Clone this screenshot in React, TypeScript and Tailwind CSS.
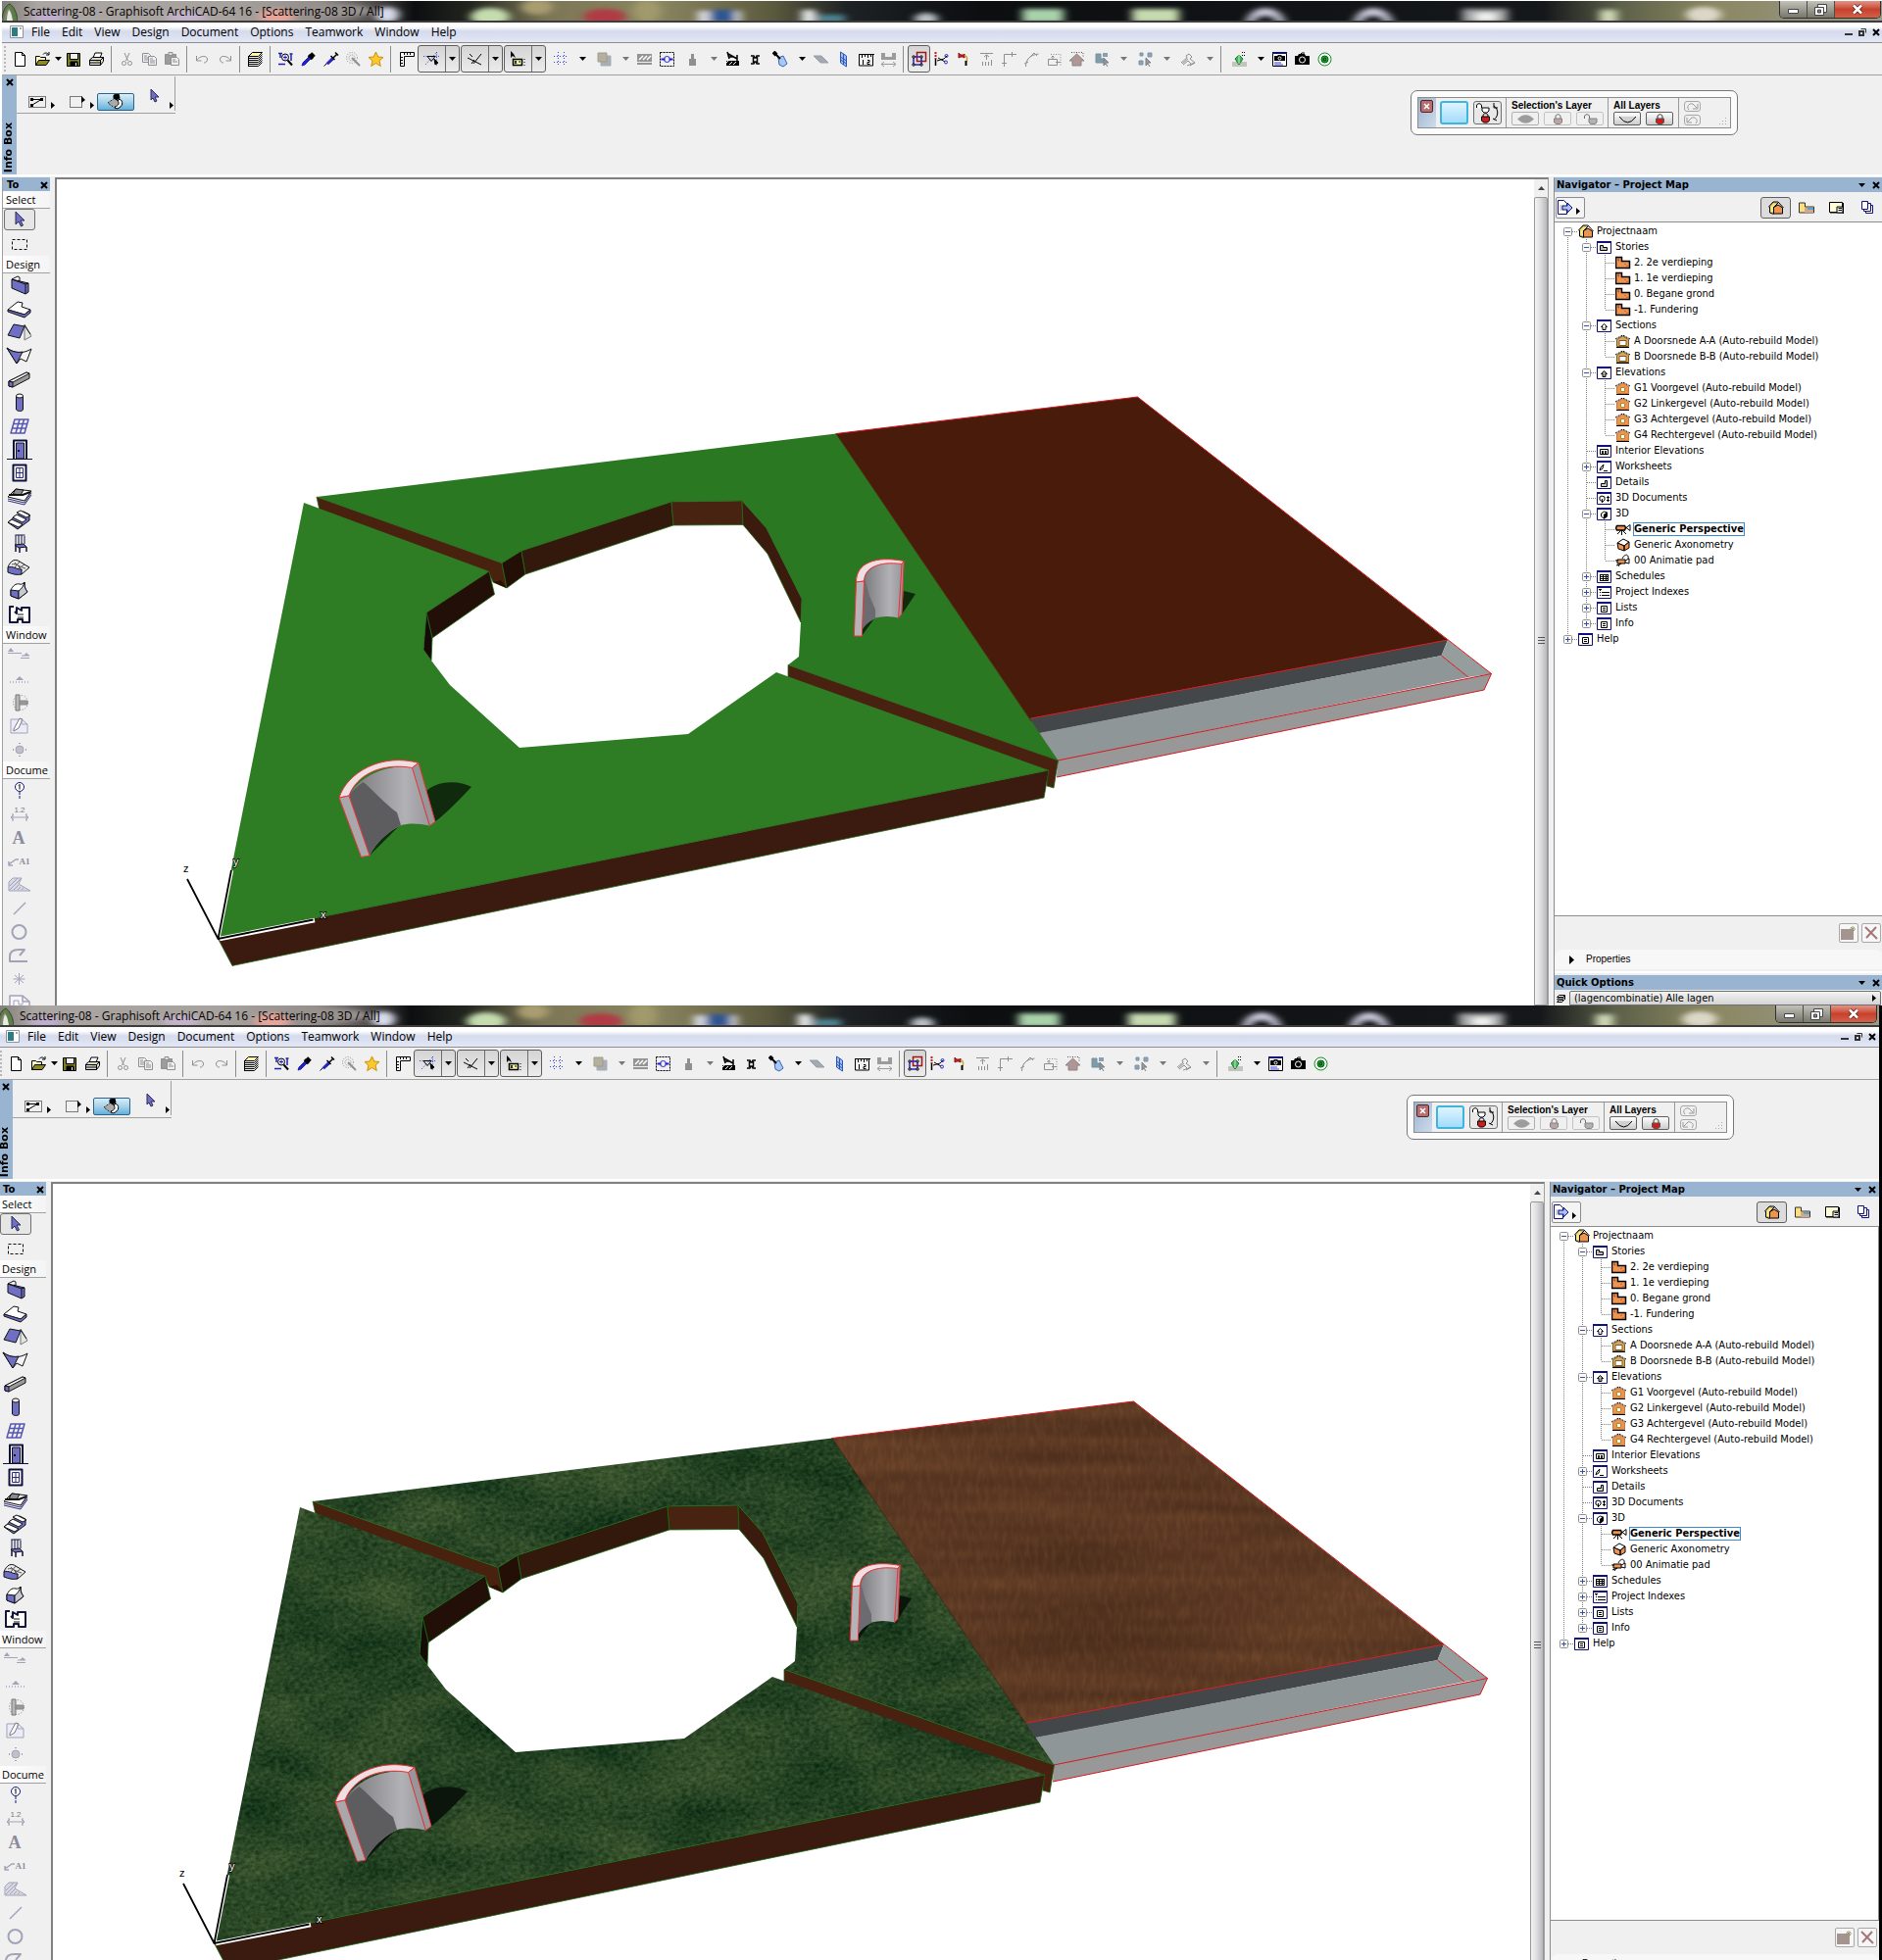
import React from "react";

type Kids = { children: React.ReactNode };

/* ---------- small drawing helpers ---------- */

function Ic({ children }: Kids) {
  return (
    <svg width="17" height="17" viewBox="0 0 17 17" fill="none" stroke="#000" className="shrink-0">
      {children}
    </svg>
  );
}

function Tool({ children }: Kids) {
  return (
    <svg width="28" height="22" viewBox="0 0 28 22" fill="none" stroke="#111" strokeLinejoin="round" className="shrink-0">
      {children}
    </svg>
  );
}

function Caret({ color = "#000" }: { color?: string }) {
  return (
    <svg width="7" height="4" viewBox="0 0 7 4" className="shrink-0">
      <path d="M0 0h7L3.5 4z" fill={color} />
    </svg>
  );
}

function RightCaret() {
  return (
    <svg width="4" height="7" viewBox="0 0 4 7" className="shrink-0">
      <path d="M0 0v7L4 3.5z" fill="#000" />
    </svg>
  );
}

function Cross({ size = 8 }: { size?: number }) {
  return (
    <svg width={size} height={size} viewBox="0 0 8 8" className="shrink-0">
      <path d="M1 1l6 6M7 1L1 7" stroke="#000" strokeWidth="2" />
    </svg>
  );
}

/* ---------- top toolbar icons ---------- */

const G = "#8f8f93";

const icons: Record<string, React.ReactNode> = {
  New: <Ic><path d="M3.5 1.5h7l3 3v11h-10zM10.5 1.5v3h3" fill="#fff" /></Ic>,
  Open: (
    <Ic>
      <path d="M1.5 14.5v-9h4l1 1h5v3" fill="#fffcc0" />
      <path d="M1.5 14.5l3-5h11l-3.500 5z" fill="#8a8a20" />
      <path d="M9 3.500c1.500-2 4-2 5.500 0M15 1v3h-3" />
    </Ic>
  ),
  Save: (
    <Ic>
      <path d="M1.500 2.500h13v13h-13z" fill="#7d7d1c" />
      <path d="M4.500 2.500h8v6h-8z" fill="#f0f0f0" />
      <path d="M5 11h7v4H5z" fill="#000" />
      <path d="M10 12h1v3h-1z" fill="#fff" stroke="none" />
    </Ic>
  ),
  Print: (
    <Ic>
      <path d="M5 7l2-5h7l-2 5z" fill="#fff" />
      <path d="M1.500 9l3-2.500h11v4l-3 4h-11z" fill="#d8d8d8" />
      <path d="M1.500 9.500h11v5M12.500 9.500l3-3M2 12h10" />
      <path d="M8 10.500h3" stroke="#d8c800" />
    </Ic>
  ),
  Cut: (
    <Ic>
      <path d="M6 2l3.500 8M11 2L7.500 10" stroke={G} />
      <circle cx="5.500" cy="12.500" r="2" stroke={G} />
      <circle cx="11.500" cy="12.500" r="2" stroke={G} />
    </Ic>
  ),
  Copy: (
    <Ic>
      <path d="M1.500 2.500h6l2 2v7h-8zM3 5h3M3 7h5M3 9h5" stroke={G} />
      <path d="M7.500 5.500h6l2 2v7h-8z" fill="#f0f0f0" stroke={G} />
      <path d="M9 8h3M9 10h5M9 12h5" stroke={G} />
    </Ic>
  ),
  Paste: (
    <Ic>
      <path d="M1.500 3.500h11v10h-11z" fill="#9c9c9c" stroke={G} />
      <path d="M5 1.500h4v3H5z" fill="#ddd" stroke={G} />
      <path d="M7.500 6.500h6l2 2v6h-8z" fill="#f0f0f0" stroke={G} />
      <path d="M9 9h3M9 11h5" stroke={G} />
    </Ic>
  ),
  Undo: <Ic><path d="M2.500 5v5h5M3 9.500C5 5 13 4 13.500 8c0 3-1.500 4-3.500 4" stroke={G} /></Ic>,
  Redo: <Ic><path d="M14.500 5v5h-5M14 9.500C12 5 4 4 3.500 8c0 3 1.500 4 3.500 4" stroke={G} /></Ic>,
  Layers: (
    <Ic>
      <path d="M1.500 5.500l4-4h10l-4 4z" fill="#fff8a0" />
      <path d="M1.500 7.500h10l4-4M1.500 9.500h10l4-4M1.500 11.500h10l4-4M1.500 13.500h10l4-4M1.500 15.500h10l4-4" />
      <path d="M1.500 5v11" />
    </Ic>
  ),
  "Find and Select": (
    <Ic>
      <path d="M1 2.500h4M3 2v5M1 13.500h7M12.500 3h3M14 3v7" stroke="#2020b0" strokeWidth="1.500" />
      <circle cx="8" cy="6.500" r="3.500" fill="#e8e8ff" />
      <path d="M8 4.500v4M6 6.500h4" stroke="#2020b0" />
      <path d="M10.500 9.500l4.500 5" strokeWidth="2" />
    </Ic>
  ),
  "Pick Up Parameters": (
    <Ic>
      <path d="M2 15l1-3 6-6 2 2-6 6z" fill="#2222c0" stroke="#2222c0" />
      <path d="M9 4l4 4M10.500 6.500l3-3" strokeWidth="3.500" />
      <path d="M12 5l2-2" strokeWidth="5" />
    </Ic>
  ),
  "Inject Parameters": (
    <Ic>
      <path d="M1.500 15.500l3-3" />
      <path d="M4 12.500l6-6 1.500 2-5.500 5z" fill="#2222c0" stroke="#2222c0" />
      <path d="M8.500 5l4 4M11 7l4-4M13 1.500l3 3" strokeWidth="1.500" />
    </Ic>
  ),
  "Magic Wand": (
    <Ic>
      <circle cx="7" cy="7" r="5.500" stroke={G} strokeDasharray="1 1.500" />
      <circle cx="7" cy="7" r="3" stroke={G} strokeDasharray="1 1" />
      <path d="M7 7l8 8" stroke={G} strokeWidth="2" />
    </Ic>
  ),
  Favorites: (
    <Ic>
      <path d="M8.500 1l2.200 5 5.300.5-4 3.600 1.300 5.400-4.800-3-4.800 3L5 10.100 1 6.500 6.300 6z" fill="#fdc82a" stroke="#c98e10" />
    </Ic>
  ),
  Ruler: (
    <Ic>
      <path d="M2.500 15.500v-14h14v4h-10v10z" fill="#fff" />
      <path d="M6.500 2v2M9.500 2v2M12.500 2v2M3 6.500h2M3 9.500h2M3 12.500h2" />
    </Ic>
  ),
  "Guide Lines": (
    <Ic>
      <path d="M0 5.500h16M2 14L14 1M13.500 1v15" stroke="#3344dd" strokeDasharray="1 1.500" />
      <path d="M4 5.500h8l-4 5z" />
      <path d="M11 8l4 4-3 2z" fill="#000" />
    </Ic>
  ),
  "Snap Guides": <Ic><path d="M1 7l14 7M7 13l8-10M3 3l3 3M8 9l-3 4" /></Ic>,
  Tracker: (
    <Ic>
      <path d="M1 0v7l2-2 3 2-2-4z" fill="#000" stroke="none" />
      <path d="M3.500 8.500h9v6h-9z" fill="#ffffb0" strokeWidth="1.500" />
      <path d="M5 10l2 3M7 10l-2 3M9 11h2M15 8v1M15 11v1M15 14v1" />
    </Ic>
  ),
  "Grid Snap": (
    <Ic>
      <path d="M5.500 1v15M11.500 1v15M1 5.500h15M1 11.500h15" stroke="#3344dd" strokeDasharray="1 2" />
    </Ic>
  ),
  "Trace Reference": (
    <Ic>
      <path d="M5 5h10v10H5z" fill="#a8aeb4" stroke="#a8aeb4" />
      <path d="M2 2h9v9H2z" fill="#b4b09c" stroke="#a09c8c" />
    </Ic>
  ),
  Hatch: (
    <Ic>
      <path d="M1 3h15v11H1z" fill="#949494" stroke="none" />
      <path d="M1 11h15v1H1z" fill="#f0f0f0" stroke="none" />
      <path d="M3 9l4-4M7 9l4-4M11 9l4-4" stroke="#fff" strokeWidth="1.500" />
    </Ic>
  ),
  "Virtual Trace": (
    <Ic>
      <path d="M1.500 1.500h14v14h-14z" strokeDasharray="2 1" />
      <circle cx="8.500" cy="8.500" r="3" stroke="#2020d0" />
      <path d="M2.500 8.500h4M10.500 8.500h4" stroke="#2020d0" strokeWidth="2" />
    </Ic>
  ),
  Gravity: <Ic><path d="M5 15V8h2V3h3v5h2v7z" fill="#8f8f8f" stroke="none" /></Ic>,
  Explore: (
    <Ic>
      <path d="M2 10h13v5H2z" fill="#000" stroke="none" />
      <path d="M2 12l2-2M5 14l3-3M9 14l3-3" stroke="#fff" />
      <path d="M3 1l2 7M4 3l9 5M5 6h5M13 4v6" strokeWidth="1.500" />
    </Ic>
  ),
  Intersect: <Ic><path d="M4 5h3l1 2h1l1-2h3M4 13h3l1-2h1l1 2h3M6.500 6v6M10.500 6v6" strokeWidth="1.500" /></Ic>,
  "Surface Painter": (
    <Ic>
      <path d="M6 7l5-2 4 8-4 3-4-2z" fill="#a8c8f4" stroke="#3b62b8" />
      <path d="M2 2l6 6" strokeWidth="2" />
      <path d="M1 1l3 3" strokeWidth="4" />
    </Ic>
  ),
  "Edit Plane": <Ic><path d="M1 5h8l7 7H8z" fill="#a3a9b0" stroke="#989ea6" /></Ic>,
  "Cutting Plane": (
    <Ic>
      <path d="M5.500 1l6 4v11l-6-4z" fill="#9fc0f4" stroke="#2d53b4" />
      <path d="M8.500 3v11M5.500 6l6 4M5.500 9l6 4" stroke="#2d53b4" />
    </Ic>
  ),
  Measure: (
    <Ic>
      <path d="M1 3.500h16M1.500 3v12h14V3M4.500 4v3M7.500 4v2M10.500 4v3M13.500 4v2" fill="none" />
      <path d="M5.500 9v5M10 9.500h2v2h-2v2h2.500" />
    </Ic>
  ),
  Dimension: (
    <Ic>
      <path d="M1 2h4v4h7V2h4v7H1z" fill="#9b9b9b" stroke="none" />
      <path d="M1 13.500h15M4 11l-3 2.500L4 16M13 11l3 2.500-3 2.500" stroke="#9b9b9b" />
    </Ic>
  ),
  "Suspend Groups": (
    <Ic>
      <path d="M6.500 1.500h9v9h-9z" stroke="#a31515" strokeWidth="1.500" />
      <path d="M3 6h8v8H3z" stroke="#2424c8" strokeWidth="1.500" />
      <path d="M2 5h2v2H2zM10 5h2v2h-2zM2 13h2v2H2zM10 13h2v2h-2z" fill="#fff" stroke="#111" />
    </Ic>
  ),
  Split: (
    <Ic>
      <path d="M2.500 1v7" stroke="#c81e1e" strokeWidth="2" strokeDasharray="2 1" />
      <path d="M2.500 8v7" strokeWidth="1.500" />
      <path d="M4 10l7-2 3-3M5 7l7 4" />
      <circle cx="13.500" cy="5" r="1.500" stroke="#2424c8" />
      <circle cx="13" cy="11.500" r="1.500" stroke="#2424c8" />
    </Ic>
  ),
  Adjust: (
    <Ic>
      <path d="M3 2l2 2h3l1-1v4L7 6H5L3 7z" fill="#d02525" stroke="#8a1010" />
      <path d="M9 5c3 0 3 3 2 6" stroke="#caa030" strokeWidth="1.500" />
      <path d="M10.500 10v5" strokeWidth="2" />
    </Ic>
  ),
  Elevate: <Ic><path d="M2 2.500h13M8.500 4v5M6 6l2.500-2L11 6M4.500 11v4M7.500 11v4M10.500 11v4M13.500 9v6" stroke={G} /></Ic>,
  Fillet: <Ic><path d="M3.500 16V3.500H16M1 12.500h5M11.500 1v5" stroke={G} /></Ic>,
  Chamfer: <Ic><path d="M2.500 16c0-7 4-12 13-13M1 13l4-2M4 9l7-7 3 3" stroke={G} /></Ic>,
  Stretch: (
    <Ic>
      <path d="M5 3.500h10v11" stroke={G} strokeDasharray="1 1.500" />
      <path d="M2.500 8.500h9v6h-9zM7 8V5M5.500 6.500L7 5l1.500 1.500M10 11.500h5" stroke={G} />
    </Ic>
  ),
  Roof: (
    <Ic>
      <path d="M3 1.500h12v5" stroke="#555" strokeDasharray="1 1.500" />
      <path d="M1 10l7.500-7 7.500 7h-3v5H4v-5z" fill="#b29696" stroke="#888" />
    </Ic>
  ),
  Solid: (
    <Ic>
      <path d="M2 3h5v5h4v4H2z" fill="#7f9caa" stroke="#77909c" />
      <path d="M9 2h5v4H9z" fill="#8a9fb4" stroke="none" />
      <path d="M10 7v8l2-2 2 3M10 7l5 5h-3" stroke="#7c8288" fill="#8c9298" />
    </Ic>
  ),
  Group: (
    <Ic>
      <path d="M3 2h3v3H3zM11 2h4v4h-4zM2 10h4v4H2z" fill="#8ba2b4" stroke="#8095a8" />
      <path d="M9 7v8l2-2 2 3M9 7l5 5h-3" stroke="#7c8288" fill="#8c9298" />
    </Ic>
  ),
  Order: (
    <Ic>
      <path d="M1 12l6-5-1-2 3-2 3 3-2 2 5 4-5 3M3 14l5-4 3 3M7 15l8-3M2 13l6-5" stroke={G} />
    </Ic>
  ),
  "3D Window": (
    <Ic>
      <path d="M1 11h15v5H1z" fill="#c4c4be" stroke="none" />
      <path d="M8 4l4 4-4 6-4-6z" fill="#46b35a" stroke="#1f7a35" />
      <path d="M8 4v9" stroke="#c4f0cc" />
      <path d="M11 1.500h4M11 4.500h4" strokeDasharray="1 1" />
    </Ic>
  ),
  Render: (
    <Ic>
      <path d="M1.500 1.500h14v14h-14z" fill="#fff" />
      <path d="M1 1h15v2H1z" fill="#10107c" stroke="none" />
      <path d="M3 5h3l1-1h3l1 1h3v5H3z" fill="#000" stroke="none" />
      <circle cx="8.500" cy="7.500" r="1.500" stroke="#fff" />
      <path d="M3 12h7M3 14h9" stroke="#3a3ad8" />
    </Ic>
  ),
  Camera: (
    <Ic>
      <path d="M1 5h3l1-2h6l1 2h4v9H1z" fill="#000" stroke="none" />
      <circle cx="8.500" cy="9" r="3" stroke="#fff" />
      <path d="M7 3l1-1h3" />
    </Ic>
  ),
  "Go to GRAPHISOFT": (
    <Ic>
      <circle cx="8.500" cy="8.500" r="6.500" stroke="#1a8a2a" fill="#f4fff4" />
      <circle cx="8.500" cy="8.500" r="3.500" fill="#25a536" stroke="#0a5a16" />
      <path d="M10 7.500c-2-1-3 0-3 1.500s2 1 3 0H9" stroke="#042f0a" />
    </Ic>
  ),
};

type Entry = [kind: "b" | "d" | "p" | "k" | "s", name?: string, dim?: boolean];

// b: button, d: button with menu arrow, p: framed pair, k: framed button, s: separator
const toolbar: Entry[] = [
  ["b", "Save"], ["b", "Print"], ["s"],
  ["b", "Cut"], ["b", "Copy"], ["b", "Paste"], ["s"],
  ["b", "Undo"], ["b", "Redo"], ["s"],
  ["b", "Layers"], ["s"],
  ["b", "Find and Select"], ["b", "Pick Up Parameters"], ["b", "Inject Parameters"], ["b", "Magic Wand"], ["b", "Favorites"], ["s"],
  ["b", "Ruler"],
  ["p", "Guide Lines"], ["p", "Snap Guides"], ["p", "Tracker"],
  ["d", "Grid Snap"], ["d", "Trace Reference", true],
  ["b", "Hatch"], ["b", "Virtual Trace"],
  ["d", "Gravity", true],
  ["b", "Explore"], ["b", "Intersect"],
  ["d", "Surface Painter"],
  ["b", "Edit Plane"], ["b", "Cutting Plane"], ["b", "Measure"], ["b", "Dimension"], ["s"],
  ["k", "Suspend Groups"],
  ["b", "Split"], ["b", "Adjust"], ["b", "Elevate"], ["b", "Fillet"], ["b", "Chamfer"], ["b", "Stretch"], ["b", "Roof"],
  ["d", "Solid", true], ["d", "Group", true], ["d", "Order", true], ["s"],
  ["d", "3D Window"], ["b", "Render"], ["b", "Camera"], ["b", "Go to GRAPHISOFT"],
];

function ToolbarEntry({ entry }: { entry: Entry }) {
  const [kind, name = "", dim] = entry;
  if (kind === "s") {
    return <div className="mx-[3px] h-[27px] w-[2px] shrink-0 border-l border-[#8c8c8c]" />;
  }
  if (kind === "p") {
    return (
      <div className="mr-px flex h-7 w-[43px] shrink-0 rounded-[3px] border border-[#5d5d5d] bg-linear-to-b from-[#d4d4d4] to-[#ececec]">
        <button aria-label={name} className="flex w-[27px] items-center justify-center">{icons[name]}</button>
        <button aria-label={`${name} menu`} className="flex w-[14px] items-center justify-center border-l border-[#6d6d6d]">
          <Caret />
        </button>
      </div>
    );
  }
  if (kind === "k") {
    return (
      <button aria-label={name} className="flex h-7 w-[23px] shrink-0 items-center justify-center rounded-[3px] border border-[#5d5d5d] bg-linear-to-b from-[#d4d4d4] to-[#ececec]">
        {icons[name]}
      </button>
    );
  }
  if (kind === "d") {
    return (
      <div className="flex h-7 w-11 shrink-0">
        <button aria-label={name} className="flex w-[29px] items-center justify-center">{icons[name]}</button>
        <button aria-label={`${name} menu`} className="flex w-[15px] items-center justify-center">
          <Caret color={dim ? "#777" : "#000"} />
        </button>
      </div>
    );
  }
  return (
    <button aria-label={name} className="flex h-7 w-[23px] shrink-0 items-center justify-center">
      {icons[name]}
    </button>
  );
}

/* ---------- toolbox ---------- */

const V = "#6f6fc4";
const L = "#a3a3b8";

const arrowTool = (
  <Tool><path d="M10 3v13l3-3 2.500 5 2-1-2.500-5h4z" fill={V} stroke="#2a2a58" /></Tool>
);

const sections: [string, [string, React.ReactNode][]][] = [
  ["Select", [
    ["Arrow", arrowTool],
    ["Marquee", <Tool><path d="M6.500 6.500h15v10h-15z" strokeDasharray="3 2" /></Tool>],
  ]],
  ["Design", [
    ["Wall", <Tool><path d="M6 5l6-3 2 1v4l-2-1" fill="#fff" /><path d="M6 5l17 4v9l-3 2-14-6z" fill={V} /><path d="M6 5l14 5v10M20 10l3-1" /></Tool>],
    ["Slab", <Tool><path d="M2 12l10-8 5 1-1 4 9 3-6 5z" fill="#fff" /><path d="M2 12l17 5 6-5v3l-6 5-17-6z" fill={V} /></Tool>],
    ["Roof", <Tool><path d="M19 3l7 12-7 4z" fill="#e4e4e4" stroke="#777" /><path d="M2 14L8 3l11 2-5 12z" fill={V} /><path d="M19 4l6 9" /></Tool>],
    ["Shell", <Tool><path d="M1 3c8 6 17 6 25 1L21 17l-6-3-4 5z" fill="#f4f4f4" /><path d="M1 3c5 4 11 5 16 4L11 19z" fill={V} /></Tool>],
    ["Beam", <Tool><path d="M3 13L21 4l3 1v5L7 19l-4-1z" fill="#9a9a9a" /><path d="M3 13L21 4l3 1L7 14z" fill="#fff" /><path d="M3 13l4 1v5l-4-1z" fill={V} /></Tool>],
    ["Column", <Tool><path d="M10.500 4v14c2 2 6 2 7 0V4" fill={V} /><ellipse cx="14" cy="4" rx="3.500" ry="2" fill="#fff" /></Tool>],
    ["Curtain Wall", <Tool><path d="M9 4h14l-4 14H5zM14 4l-4 14M18.500 4l-4 14M8 8.500h14M6.500 13h14" stroke="#5656b4" strokeWidth="1.500" /></Tool>],
    ["Door", <Tool><path d="M8 20V1.500h13V20" fill="#fff" strokeWidth="2" stroke="#10103c" /><path d="M10.500 20V4h8v16z" fill={V} /><path d="M1 20.500h26" stroke="#10103c" /><path d="M12 12h2" strokeWidth="2" /></Tool>],
    ["Window", <Tool><path d="M7.500 2.500h13v16h-13z" fill="#fff" stroke="#10103c" strokeWidth="2" /><path d="M10.500 5.500h7v10h-7zM14 5.500v10M10.500 10.500h7" stroke="#2a2a78" /></Tool>],
    ["Skylight", <Tool><path d="M2 15l17 4 7-10M2 13l17 4 7-10" stroke="#34347c" /><path d="M2 11l8-8 16 2-7 10z" fill="#fff" /><path d="M10 3l8 1-3 5-8-1z" fill="#8a8a90" /><path d="M3 9h14l8-3" strokeWidth="2" /></Tool>],
    ["Stair", <Tool><path d="M2 13l4-3 2-3 4-1 2-3 4-1 6 3v6l-12 9z" fill={V} /><path d="M11 3l4-2 10 5-4 2zM7 8l4-3 10 5-4 3zM2 13l4-3 11 5-4 3z" fill="#fff" /></Tool>],
    ["Object", <Tool><path d="M10 2v10M13 2v9M16 2v9M19 3v8M9.500 2h10" stroke="#10103c" /><path d="M9 12l9-1 3 3-8 1z" fill={V} /><path d="M10 13v6M14 15v5M21 14v5" stroke="#10103c" strokeWidth="1.500" /></Tool>],
    ["Mesh", <Tool><path d="M2 11c3-8 8-9 12-6l10 6-8 7z" fill="#e8e8e8" /><path d="M2 11c5-2 8 2 14 2v5c-5 1-9 0-14-2z" fill={V} /><path d="M9 6l8 8M14 5l-5 6M19 8l-6 4M6 8c4-2 8 3 14 4" stroke="#555" /></Tool>],
    ["Morph", <Tool><path d="M5 10c2-4 5-7 9-6 2 1 4-1 5-2 0 6 1 7 3 10l-9 7-8-3z" fill="#fff" /><path d="M5 10l8 1v8l-8-3z" fill={V} /><path d="M13 11c3-2 5-5 6-9 0 6 1 7 3 10l-9 7z" fill="#c8c8d4" /></Tool>],
    ["Zone", <Tool><path d="M8 3H4v16h8v-3h5v3h7V4h-8v3l-5-3v6l-2-2" fill="#fff" stroke="#14143c" strokeWidth="2" /><path d="M12 11h6M12 14h6" /></Tool>],
  ]],
  ["Window", [
    ["Section", <Tool><path d="M2 8.500h14M16 11h8M15 13.500h9" stroke={L} /><path d="M2 7l3-4 3 4zM18 11l3-3 3 3z" fill={L} stroke="none" /></Tool>],
    ["Elevation", <Tool><path d="M4 14h20" stroke={L} strokeDasharray="1 2" strokeWidth="1.500" /><path d="M10 12l4-4 4 4z" fill={L} stroke="none" /></Tool>],
    ["Detail", <Tool><circle cx="15" cy="11" r="7.500" stroke="#777" strokeDasharray="1 2" /><path d="M10 3h4v16h-4z" fill="#b8b8b8" stroke="#777" /><path d="M14 9h8v4h-8z" fill="#999" stroke="#888" /></Tool>],
    ["Worksheet", <Tool><path d="M5 4h11l6 5v9H5z" fill="#ececf8" stroke={L} /><path d="M8 14L14 3l3 1-4 9-5 3z" fill="#fff" stroke="#777788" /><path d="M16 4v5h6" stroke={L} /></Tool>],
    ["Change", <Tool><circle cx="14" cy="11" r="4" fill="#c0c0cc" stroke={L} /><path d="M14 5v-1M14 18v-1M8 11H7M21 11h-1" stroke={L} strokeWidth="2" /></Tool>],
  ]],
  ["Docume", [
    ["Grid Element", <Tool><circle cx="14" cy="7" r="4.500" fill="#fff" stroke="#14147c" /><path d="M14 12v8" stroke="#14147c" strokeDasharray="3 1" /><path d="M13 5.500l1-1v5" stroke="#000" /></Tool>],
    ["Linear Dimension", <Tool><path d="M5 14h18M8 11l-3 3 3 3M20 11l3 3-3 3M7 10v8M21 10v8" stroke={L} /><text x="14" y="9" fontSize="8" fontFamily="Liberation Sans" textAnchor="middle" fill="#77777f" stroke="none">1.2</text></Tool>],
    ["Text", <Tool><text x="13" y="17" fontSize="18" fontWeight="bold" fontFamily="Liberation Serif" textAnchor="middle" fill="#8c8c9c" stroke="none">A</text></Tool>],
    ["Label", <Tool><path d="M3 14l7-5h3M3 11v4h4" stroke={L} strokeWidth="1.500" /><text x="19" y="14" fontSize="9" fontWeight="bold" fontFamily="Liberation Serif" textAnchor="middle" fill="#8c8c9c" stroke="none">A1</text></Tool>],
    ["Fill", <Tool><path d="M3 17V8l4-4h9l-3 6 12 7z" fill="#d8d8e4" stroke={L} /><path d="M4 12l8-8M4 16L15 5M8 16l5-5M12 16l3-3M16 16l2-2" stroke={L} /></Tool>],
    ["Line", <Tool><path d="M8 17L20 5" stroke={L} strokeWidth="1.500" /></Tool>],
    ["Circle", <Tool><circle cx="13.500" cy="11" r="7" stroke={L} strokeWidth="2" /></Tool>],
    ["Polyline", <Tool><path d="M22 17H4v-5c0-5 4-7 9-7h6l-5 6" stroke={L} strokeWidth="2" /></Tool>],
    ["Hotspot", <Tool><path d="M13.500 5v12M7.500 11h12M9 7l9 8M18 7l-9 8" stroke={L} /></Tool>],
    ["Figure", <Tool><path d="M4 4h13l7 6v14H4zM17 4v6h7" fill="#f6f6fa" stroke={L} strokeWidth="1.500" /><path d="M8 18V9h5v4h4v-2" stroke={L} /></Tool>],
  ]],
];

function Toolbox() {
  return (
    <div className="mr-[5px] w-[49px] shrink-0 overflow-hidden border-l border-[#a0a0a0] contain-size">
      <div className="flex h-[14px] items-center justify-between bg-[#99b4d1] pt-px pr-[2px] pl-1 font-['DejaVu_Sans',sans-serif] text-[10px] leading-[14px] font-bold">
        To
        <button aria-label="Close toolbox"><Cross /></button>
      </div>
      {sections.map(([title, tools]) => (
        <div key={title}>
          <div className="flex h-[18px] items-center border-b border-[#a0a0a0] bg-linear-to-r from-white to-[#f4f4f4] pl-[3px] font-['Open_Sans',sans-serif] text-[11px] leading-4">
            {title}
          </div>
          {tools.map(([name, icon]) => (
            <button
              key={name}
              aria-label={name}
              className={
                name === "Arrow"
                  ? "mx-px mb-[2px] flex h-[22px] w-8 items-center justify-center rounded-[3px] border border-[#707070] bg-[#e6e6e6]"
                  : "mx-px flex h-6 w-8 items-center justify-center"
              }
            >
              {icon}
            </button>
          ))}
        </div>
      ))}
    </div>
  );
}

/* ---------- title and menu bars ---------- */

function TitleBar({ id }: { id: string }) {
  return (
    <header className="relative flex h-[22px] justify-between overflow-hidden border-b-2 border-[#3c3c3c] bg-[#15181a]">
      <svg className="absolute inset-0 h-full w-full" viewBox="2 0 1919 20" preserveAspectRatio="none">
        <defs>
          <filter id={`${id}-blur`} x="-20%" y="-50%" width="140%" height="200%">
            <feGaussianBlur stdDeviation="5 2" />
          </filter>
          <linearGradient id={`${id}-tone`}>
            <stop offset="0" stopColor="#7f7b76" />
            <stop offset=".02" stopColor="#aba5a3" />
            <stop offset=".12" stopColor="#a8a29e" />
            <stop offset=".17" stopColor="#948d8a" />
            <stop offset=".2" stopColor="#4a4646" />
            <stop offset=".22" stopColor="#0c0e10" />
            <stop offset=".25" stopColor="#22261e" />
            <stop offset=".29" stopColor="#7c7656" />
            <stop offset=".35" stopColor="#8a8560" />
            <stop offset=".41" stopColor="#5c5a3e" />
            <stop offset=".45" stopColor="#1e2224" />
            <stop offset=".52" stopColor="#0c0e10" />
            <stop offset=".82" stopColor="#15181a" />
            <stop offset=".86" stopColor="#5c6048" />
            <stop offset=".91" stopColor="#8b8762" />
            <stop offset="1" stopColor="#9a9a8c" />
          </linearGradient>
        </defs>
        <rect width="1921" height="20" fill={`url(#${id}-tone)`} />
        <g filter={`url(#${id}-blur)`}>
          <ellipse cx="50" cy="17" rx="16" ry="5" fill="#c0aed0" />
          <ellipse cx="190" cy="16" rx="20" ry="6" fill="#c4b4cc" />
          <ellipse cx="282" cy="16" rx="18" ry="8" fill="#e6a49a" />
          <ellipse cx="336" cy="10" rx="44" ry="7" fill="#98928f" />
          <ellipse cx="395" cy="14" rx="12" ry="8" fill="#d8dcea" />
          <ellipse cx="500" cy="16" rx="20" ry="9" fill="#c4dcae" />
          <ellipse cx="548" cy="6" rx="16" ry="8" fill="#a89c70" />
          <ellipse cx="617" cy="16" rx="22" ry="8" fill="#b03a44" />
          <ellipse cx="660" cy="10" rx="14" ry="12" fill="#a09a6c" />
          <rect x="712" y="10" width="44" height="14" fill="#d8dce2" />
          <rect x="724" y="9" width="26" height="14" fill="#2f5690" />
          <rect x="818" y="9" width="14" height="14" fill="#e6e9ea" />
          <rect x="834" y="14" width="28" height="8" fill="#4e8494" />
          <ellipse cx="945" cy="18" rx="12" ry="6" fill="#b8c0c4" />
          <rect x="1043" y="8" width="42" height="14" fill="#a9d2ab" />
          <rect x="1155" y="8" width="48" height="14" fill="#c6dab0" />
          <ellipse cx="1291" cy="24" rx="16" ry="13" fill="none" stroke="#c6c6d8" strokeWidth="8" />
          <ellipse cx="1401" cy="24" rx="16" ry="13" fill="none" stroke="#c6c6d8" strokeWidth="8" />
          <rect x="1492" y="8" width="46" height="14" fill="#a6a8a8" />
          <rect x="1506" y="12" width="20" height="10" fill="#f0f0f0" />
          <rect x="1632" y="9" width="18" height="14" fill="#cdd6b4" />
          <ellipse cx="1738" cy="14" rx="18" ry="8" fill="#dcd8c8" />
        </g>
      </svg>
      <div className="relative flex items-center gap-[6px] pt-px">
        <svg width="16" height="18" viewBox="0 0 16 18">
          <path d="M0 16C1 8 4 2 8 1c4 3 7 8 8 17h-5C10 11 9 7 7 5 4 8 3 12 2 18H0z" fill="#5f7d48" />
          <path d="M5 18C5 13 6 10 7 7c3 3 3 7 4 11z" fill="#e6eede" />
          <path d="M0 16C1 8 4 2 8 1c4 3 7 8 8 17" stroke="#33472a" fill="none" />
        </svg>
        <h1 className="font-['Open_Sans',sans-serif] text-[12px] leading-[18px] whitespace-nowrap text-black">
          Scattering-08 - Graphisoft ArchiCAD-64 16 - [Scattering-08 3D / All]
        </h1>
      </div>
      <div className="relative mr-[2px] flex h-[18px] overflow-hidden rounded-b-[5px] border border-t-0 border-[#30302c]">
        <button aria-label="Minimize" className="flex w-7 items-end justify-center border-r border-[#4c4c48] bg-linear-to-b from-[#c4c2b8] to-[#77776e] pb-1">
          <svg width="11" height="5"><path d="M.5.5h10v4H.5z" fill="#fff" stroke="#444" /></svg>
        </button>
        <button aria-label="Restore" className="flex w-7 items-center justify-center border-r border-[#4c4c48] bg-linear-to-b from-[#c4c2b8] to-[#77776e]">
          <svg width="13" height="12" viewBox="0 0 13 12" fill="#fff" stroke="#444">
            <path d="M3.500.5h9v8h-9z" />
            <path d="M.5 3.500h9v8h-9z" />
            <path d="M3.500 6h3v3h-3z" fill="#888" />
          </svg>
        </button>
        <button aria-label="Close" className="flex w-[46px] items-center justify-center bg-linear-to-b from-[#e0948a] via-[#c8412a] to-[#d0604a]">
          <svg width="12" height="11" viewBox="0 0 12 11">
            <path d="M2 1.500l8 8M10 1.500l-8 8" stroke="#5a2018" strokeWidth="4" />
            <path d="M2 1.500l8 8M10 1.500l-8 8" stroke="#fff" strokeWidth="2.500" />
          </svg>
        </button>
      </div>
    </header>
  );
}

const menus = ["File", "Edit", "View", "Design", "Document", "Options", "Teamwork", "Window", "Help"];

function MenuBar() {
  return (
    <nav className="flex h-[21px] items-center border-b border-[#8e8e8e] bg-linear-to-b from-white from-20% via-[#d5dbed] via-45% to-[#e3e7f5] pr-[2px] pb-px pl-2">
      <svg width="14" height="13" viewBox="0 0 14 13" className="mr-2">
        <path d="M.5.500h13v12H.5z" fill="#fff" stroke="#8a94a0" />
        <path d="M2 2h6v9H2z" fill="#2f7c80" />
        <path d="M10 3h2" stroke="#555" />
      </svg>
      <div className="flex gap-3 font-['Open_Sans',sans-serif] text-[12px] leading-[18px]">
        {menus.map((m) => (
          <button key={m}>{m}</button>
        ))}
      </div>
      <div className="ml-auto flex items-center gap-[6px] pr-px">
        <button aria-label="Minimize document"><svg width="8" height="8"><path d="M0 6h8" stroke="#333" strokeWidth="2" /></svg></button>
        <button aria-label="Restore document">
          <svg width="8" height="8" viewBox="0 0 8 8" fill="none" stroke="#333"><path d="M2.500.5h5v4" /><path d="M1 3h4v4H1z" strokeWidth="2" /></svg>
        </button>
        <button aria-label="Close document"><Cross /></button>
      </div>
    </nav>
  );
}

/* ---------- info box row ---------- */

function Padlock({ body, open }: { body: string; open?: boolean }) {
  return (
    <svg width="17" height="11" viewBox="0 0 17 11" fill="none" stroke="#333">
      <path d={open ? "M2.500 5V3c0-3 5-3 5 0v2" : "M6 5V3c0-3 5-3 5 0v2"} />
      <path d={open ? "M7 5h8v4l-2 1.500H9L7 9z" : "M4.500 5h8v4l-2 1.500h-4l-2-1.500z"} fill={body} stroke="#555" />
    </svg>
  );
}

const smallButton = "flex h-[14px] w-7 items-center justify-center rounded-[2px] border";

function LayerPalette() {
  return (
    <div className="mt-[15px] mr-[148px] ml-auto h-[46px] rounded-[7px] border border-[#777] bg-[#fcfcfc] p-[6px]">
      <div className="flex h-8 w-80 border border-[#8c8c8c] bg-[#f0f0f0]">
        <div className="w-[18px] bg-linear-to-br from-[#99b4d1] to-[#cfdcea] pt-[2px] pl-[2px]">
          <button aria-label="Close palette" className="flex h-[13px] w-[13px] items-center justify-center rounded-[2px] border border-[#5c2020] bg-[#b47070]">
            <svg width="7" height="7" viewBox="0 0 7 7"><path d="M1 1l5 5M6 1L1 6" stroke="#fff" strokeWidth="1.500" /></svg>
          </button>
        </div>
        <div className="flex gap-[5px] border-r border-[#999] px-1 pt-[3px]">
          <button aria-label="Layer color" className="h-6 w-[29px] rounded-[3px] border-2 border-[#3fb4de] bg-linear-to-b from-[#def4ff] to-[#a2dcfa]" />
          <button aria-label="Swap locks" className="flex h-6 w-[29px] items-center justify-center rounded-[3px] border border-[#707070] bg-[#e8e8e8]">
            <svg width="27" height="22" viewBox="0 0 27 22" fill="none" stroke="#000">
              <path d="M2.500 6V4c0-3 5-3 5 0v2M8 6h7v3l-2 2h-3L8 9z" fill="#fff" />
              <path d="M9 15v-1c0-3 5-3 5 0v1" />
              <path d="M7.500 15h8v4l-2 2h-4l-2-2z" fill="#d01c1c" />
              <path d="M20 4c5 3 5 11 0 14M20 1v5h4M19 17l4 2" />
            </svg>
          </button>
        </div>
        <div className="border-r border-[#999] pr-1 pl-[5px]">
          <div className="pt-[2px] font-['Liberation_Sans',sans-serif] text-[10px] leading-[12px] font-bold">Selection's Layer</div>
          <div className="flex gap-[5px]">
            <button aria-label="Hide layer" className={`${smallButton} border-[#b0b0b0]`}>
              <svg width="17" height="9" viewBox="0 0 17 9"><path d="M0 4.500Q8.500-4 17 4.500 8.500 13 0 4.500z" fill="#9c9c9c" /></svg>
            </button>
            <button aria-label="Lock layer" className={`${smallButton} border-[#b0b0b0] opacity-70`}><Padlock body="#a88484" /></button>
            <button aria-label="Unlock layer" className={`${smallButton} border-[#b0b0b0] opacity-70`}><Padlock body="#999" open /></button>
          </div>
        </div>
        <div className="border-r border-[#999] pr-[5px] pl-[5px]">
          <div className="pt-[2px] font-['Liberation_Sans',sans-serif] text-[10px] leading-[12px] font-bold">All Layers</div>
          <div className="flex gap-[5px]">
            <button aria-label="Show all layers" className={`${smallButton} border-[#606060] bg-linear-to-b from-white to-[#ccc]`}>
              <svg width="19" height="9" viewBox="0 0 19 9"><path d="M1 2Q9.500 14 18 2" fill="#d0d0d0" stroke="#000" /></svg>
            </button>
            <button aria-label="Unlock all layers" className={`${smallButton} border-[#606060] bg-linear-to-b from-white to-[#ccc]`}><Padlock body="#d01c1c" /></button>
          </div>
        </div>
        <div className="flex flex-col gap-[3px] pt-[3px] pl-[5px]">
          <button aria-label="Redo layers" className="flex h-[11px] w-[17px] items-center justify-center rounded-[3px] border border-[#a8a8a8]">
            <svg width="13" height="9" viewBox="0 0 13 9" fill="none" stroke="#999"><path d="M3 8C0 5 3 1 7 2l4 4M12 2v5H7" /></svg>
          </button>
          <button aria-label="Undo layers" className="flex h-[11px] w-[17px] items-center justify-center rounded-[3px] border border-[#a8a8a8]">
            <svg width="13" height="9" viewBox="0 0 13 9" fill="none" stroke="#999"><path d="M10 8c3-3 0-7-4-6L2 6M1 2v5h5" /></svg>
          </button>
        </div>
        <svg width="8" height="8" viewBox="0 0 8 8" className="mr-[3px] mb-[2px] ml-auto self-end" fill="#aaa">
          <path d="M6 0h1v1H6zM3 3h1v1H3zM6 3h1v1H6zM0 6h1v1H0zM3 6h1v1H3zM6 6h1v1H6z" />
        </svg>
      </div>
    </div>
  );
}

function InfoBox() {
  return (
    <section className="flex h-[103px] border-b-2 border-white bg-[#f0f0f0]">
      <div className="flex w-[15px] flex-col justify-between bg-[#99b4d1] pt-[3px] pb-[2px]">
        <button aria-label="Close info box" className="self-center"><Cross /></button>
        <div className="rotate-180 self-start font-['DejaVu_Sans',sans-serif] text-[11px] leading-[13px] font-bold [writing-mode:vertical-rl]">Info Box</div>
      </div>
      <div className="mt-px flex h-[38px] w-[162px] border-b border-[#a0a0a0]">
        <div className="flex h-[35px] w-full items-end border-r border-[#a0a0a0] pl-3">
          <button aria-label="Geometry method" className="flex items-end gap-[5px] pb-[2px]">
            <svg width="18" height="12" viewBox="0 0 18 12" className="mb-px" fill="none" stroke="#000">
              <path d="M.5.500h17v11H.5z" strokeDasharray="1 1" />
              <path d="M3 3.500h10M14 3L4 9" />
              <path d="M2 2h3v3H2zM12 2h3v3h-3zM2 8h3v3H2z" fill="#000" stroke="none" />
            </svg>
            <RightCaret />
          </button>
          <button aria-label="Selection method" className="ml-[15px] flex items-end gap-[5px] pb-[2px]">
            <svg width="16" height="12" viewBox="0 0 16 12" className="mb-px" fill="none" stroke="#000">
              <path d="M.5.500h12v11H.5z" strokeDasharray="1 1" />
              <path d="M12 0l4 4-4 3z" fill="#000" stroke="none" />
            </svg>
            <RightCaret />
          </button>
          <button aria-label="Quick selection" className="ml-[3px] flex h-[18px] w-[38px] items-center justify-center rounded-[2px] border border-[#2c628b] bg-linear-to-b from-[#d8eef8] via-[#a6d2ea] to-[#5fb0dc]">
            <svg width="18" height="16" viewBox="0 0 18 16" stroke="#000">
              <path d="M1 9l7-5 6 6-5 5z" fill="#aaa" strokeDasharray="1 1" />
              <path d="M7 1l5-1 1 4-3 2-3-2z" fill="#000" />
              <path d="M13 5c4 2 4 8-3 10l-2-2c4-1 5-4 3-6z" fill="#fff" />
            </svg>
          </button>
          <button aria-label="Arrow tool" className="ml-4 flex items-end gap-[11px] pb-[2px]">
            <svg width="9" height="14" viewBox="0 0 9 14" className="mb-[6px]"><path d="M1 0v11l2-2 2 4 2-1-2-4h4z" fill={V} stroke="#2a2a58" /></svg>
            <RightCaret />
          </button>
        </div>
      </div>
      <LayerPalette />
    </section>
  );
}

/* ---------- navigator ---------- */

function Frame({ children }: Kids) {
  return (
    <svg width="16" height="13" viewBox="0 0 16 13" fill="none" stroke="#000" className="shrink-0">
      <path d="M.500.500h14v12H.500z" fill="#fff" stroke="#10107c" />
      <path d="M0 0h15v2H0z" fill="#10107c" stroke="none" />
      {children}
    </svg>
  );
}

function Node({ children }: Kids) {
  return (
    <svg width="16" height="14" viewBox="0 0 16 14" fill="none" stroke="#000" className="shrink-0">
      {children}
    </svg>
  );
}

const O = "#ee9350";

const nodeIcons: Record<string, React.ReactNode> = {
  home: <Node><path d="M1.500 12V6l4-4.500 3 1V12z" fill="#f8e480" stroke="#b8a030" /><path d="M5.500 13V6.500L10 4l4.500 3v6z" fill={O} /><path d="M0 6.500L5 1h5l5.500 6M5 7l5-5M1.500 6v6l4 1.500" /></Node>,
  story: <Node><path d="M.5 1.500h6v4h8v7H.5z" fill={O} strokeWidth="1.500" /><path d="M3 2v3h1M10 8v1M12 10v1" stroke="#8a4a20" /></Node>,
  section: <Node><path d="M1.500 12.500V5.500l6-3.500 6 3.500v7z" fill="#d8a860" stroke="#7c5c20" /><path d="M4 6.500h7v5H4z" fill="#fff" stroke="#7c5c20" /><path d="M0 5l7.500-4L15 5" strokeDasharray="2 1" /><path d="M1 13.500h13" /></Node>,
  elevation: <Node><path d="M1.500 12.500V5.500l6-3.500 6 3.500v7z" fill={O} stroke="#c87838" /><path d="M5.500 6.500h4v4h-4z" fill="#fff" stroke="#a89020" /><path d="M0 5l7.500-4L15 5" strokeDasharray="2 1" /><path d="M1 13.500h13" /></Node>,
  camera: <Node><path d="M1.500 3.500h8l1 2-1 2.500h-8l-1-2z" fill={O} strokeWidth="1.500" /><path d="M11 5.500l4-3v6zM6 8l-4 4M6.500 8v5M7 8l4 4" /></Node>,
  axo: <Node><path d="M2 5l6-4 6 3-5 4z" fill="#fff" /><path d="M2 5l7 3v5l-6-2zM9 8l5-4v6l-5 3z" fill={O} /></Node>,
  path: <Node><path d="M2 6h8v4H2z" fill={O} /><path d="M10 7l4-2v5l-4-1M1 12l5-2M7 5c3-6 7-4 6 0M5 10l-2 3M0 7h3" /></Node>,
  fStories: <Frame><path d="M3.500 4.500h3v2h4v3h-7z" fill="#bbb" /></Frame>,
  fSections: <Frame><path d="M4.500 7.500l3-3 3 3H9v3H6v-3z" fill="#fff" /></Frame>,
  fElevations: <Frame><path d="M4.500 7.500l3-3 3 3H9v3H6v-3z" fill="#aaa" /></Frame>,
  fInterior: <Frame><path d="M3.500 4.500h8v5h-8z" /><path d="M5 6h2v3H5zM8 6h2v3H8z" fill="#222" stroke="none" /></Frame>,
  fWork: <Frame><path d="M3 10l1-3 3-3-1 4-3 2M7 10.500h4" /></Frame>,
  fDetails: <Frame><path d="M8.500 4.500h2v6h-6v-3h4z" fill="#ccc" /></Frame>,
  fDocs: <Frame><path d="M3 5l2-1 3 1v3l-2 2-3-2zM5.500 7v4M11.500 4v6M10 5.500h3M10 8.500h3" /></Frame>,
  f3D: <Frame><path d="M4.500 6l3-2 3 1v4l-3 2-3-2z" fill="#fff" /><path d="M7.500 7l3-2v4l-3 2z" fill="#000" /></Frame>,
  fTable: <Frame><path d="M3 4h9v7H3z" fill="#000" stroke="none" /><path d="M4 5h2v1H4zM7 5h2v1H7zM10 5h1v1h-1zM4 7h2v1H4zM7 7h2v1H7zM10 7h1v1h-1zM4 9h2v1H4zM7 9h2v1H7zM10 9h1v1h-1z" fill="#fff" stroke="none" /></Frame>,
  fIndex: <Frame><path d="M2 3.500h3M3.500 4v1M5 6.500h8M5 9.500h8M3 6.500h1M3 9.500h1" /></Frame>,
  fList: <Frame><path d="M4.500 4.500h6v6h-6z" /><path d="M6 6.500h3M6 8.500h3" /></Frame>,
};

// cell codes: "|" line through, "L" last child, "T" child, "+"/"-" expander
type Row = [cells: string, icon: string, label: string];

const rows: Row[] = [
  ["-", "home", "Projectnaam"],
  ["|-", "fStories", "Stories"],
  ["||T", "story", "2. 2e verdieping"],
  ["||T", "story", "1. 1e verdieping"],
  ["||T", "story", "0. Begane grond"],
  ["||L", "story", "-1. Fundering"],
  ["|-", "fSections", "Sections"],
  ["||T", "section", "A Doorsnede A-A (Auto-rebuild Model)"],
  ["||L", "section", "B Doorsnede B-B (Auto-rebuild Model)"],
  ["|-", "fElevations", "Elevations"],
  ["||T", "elevation", "G1 Voorgevel (Auto-rebuild Model)"],
  ["||T", "elevation", "G2 Linkergevel (Auto-rebuild Model)"],
  ["||T", "elevation", "G3 Achtergevel (Auto-rebuild Model)"],
  ["||L", "elevation", "G4 Rechtergevel (Auto-rebuild Model)"],
  ["|T", "fInterior", "Interior Elevations"],
  ["|+", "fWork", "Worksheets"],
  ["|T", "fDetails", "Details"],
  ["|T", "fDocs", "3D Documents"],
  ["|-", "f3D", "3D"],
  ["||T", "camera", "Generic Perspective"],
  ["||T", "axo", "Generic Axonometry"],
  ["||L", "path", "00 Animatie pad"],
  ["|+", "fTable", "Schedules"],
  ["|+", "fIndex", "Project Indexes"],
  ["|+", "fList", "Lists"],
  ["|+", "fList", "Info"],
  ["+", "fList", "Help"],
];

function Cell({ code, first, last }: { code: string; first: boolean; last: boolean }) {
  const box = code === "+" || code === "-";
  return (
    <svg width="19" height="16" viewBox="0 0 19 16" fill="none" stroke="#808080" className="shrink-0">
      <path d={first ? "M9.500 8v8" : last ? "M9.500 0v8" : "M9.500 0v16"} strokeDasharray="1 1" />
      {code !== "|" && <path d="M10 8.500h9" strokeDasharray="1 1" />}
      {box && (
        <>
          <rect x="5.500" y="4.500" width="8" height="8" rx="1" fill="#fafafa" stroke="#919191" />
          <path d={code === "+" ? "M7 8.500h5M9.500 6v5" : "M7 8.500h5"} stroke="#3c50a0" />
        </>
      )}
    </svg>
  );
}

function TreeRow({ row }: { row: Row }) {
  const [cells, icon, label] = row;
  const current = label === "Generic Perspective";
  return (
    <li className="flex h-4 items-center">
      {cells.split("").map((code, i) => (
        <Cell
          key={i}
          code={code}
          first={label === "Projectnaam"}
          last={code === "L" || label === "Help" || (label === "Info" && i === 1)}
        />
      ))}
      <span className="ml-px">{nodeIcons[icon]}</span>
      <button
        className={
          current
            ? "ml-[2px] h-[14px] border border-[#3c8ad0] text-[11px] leading-[12px] font-bold whitespace-nowrap"
            : "ml-[3px] h-4 text-[11px] leading-[14px] whitespace-nowrap"
        }
      >
        {label}
      </button>
    </li>
  );
}

function PanelHeader({ title }: { title: string }) {
  return (
    <div className="flex h-[15px] items-center bg-[#99b4d1] pt-px pr-[3px] pl-[2px] font-['DejaVu_Sans',sans-serif] text-[10px] leading-[14px] font-bold">
      <h2 className="mr-auto">{title}</h2>
      <button aria-label={`${title} menu`} className="mr-[7px]"><Caret /></button>
      <button aria-label={`Close ${title}`}><Cross /></button>
    </div>
  );
}

function Navigator() {
  return (
    <aside className="ml-[5px] w-[336px] shrink-0 border-l border-[#8c8c8c] font-['DejaVu_Sans_Condensed','Liberation_Sans',sans-serif]">
      <PanelHeader title="Navigator – Project Map" />
      <div className="flex h-[30px] items-center pt-px pr-px pl-px">
        <button aria-label="Project chooser" className="mr-auto flex h-[22px] w-[30px] items-end gap-[3px] rounded-[2px] border border-[#8c8c8c] bg-[#f4f4f4] pb-[3px]">
          <svg width="17" height="15" viewBox="0 0 17 15" fill="none" stroke="#10107c">
            <path d="M1.500.500h6l3 3v11h-9z" fill="#fff" />
            <path d="M3 6h4M3 8h3M3 10h4" stroke="#aaa" />
            <path d="M6 6h5V3l5 5-5 5v-3H6z" fill="#a8c0f4" />
          </svg>
          <RightCaret />
        </button>
        <button aria-label="Project Map" className="flex h-[22px] w-[31px] items-center justify-center rounded-[3px] border border-[#606060] bg-[#dcdcdc]">{nodeIcons.home}</button>
        <button aria-label="View Map" className="flex w-[31px] items-center justify-center">
          <svg width="16" height="12" viewBox="0 0 16 12" stroke="#333"><path d="M.5 1h6v4h9v6H.5z" fill="#f8e080" /><path d="M6 6h9v5H6z" fill="#d0a890" stroke="none" /><path d="M9 6h6v2H9z" fill="#5aa0d0" stroke="none" /></svg>
        </button>
        <button aria-label="Layout Book" className="flex w-[31px] items-center justify-center">
          <svg width="15" height="12" viewBox="0 0 15 12" fill="none" stroke="#000"><path d="M.5.500h13v10H.5z" fill="#ffffd8" /><path d="M8 5h6v6H8zM9.500 6.500H13M9.500 8.500H13" fill="#fff" /><path d="M14.500 1v11H1" /></svg>
        </button>
        <button aria-label="Publisher Sets" className="flex w-[31px] items-center justify-center">
          <svg width="12" height="13" viewBox="0 0 12 13" fill="#fff" stroke="#10107c"><path d="M4.500 4.500h7v8h-7z" /><path d="M2.500 2.500h7v8h-7z" /><path d="M.5.500h6v8h-6z" /></svg>
        </button>
      </div>
      <ul className="min-h-[709px] border-y border-r border-[#8c8c8c] bg-white pt-px pl-1">
        {rows.map((row) => (
          <TreeRow key={row[2]} row={row} />
        ))}
      </ul>
      <div className="flex justify-end gap-[3px] pt-[7px] pr-[2px] pb-[7px]">
        <button aria-label="New item" className="flex h-5 w-5 items-center justify-center rounded-[2px] border border-[#a8a8a8] bg-[#f6f6f6]">
          <svg width="16" height="14" viewBox="0 0 16 14"><path d="M0 3h13v11H0z" fill="#a39490" /><path d="M12 0v6M9 3h6M10 1l4 4M14 1l-4 4" stroke="#9a9a74" /></svg>
        </button>
        <button aria-label="Delete item" className="flex h-5 w-5 items-center justify-center rounded-[2px] border border-[#a8a8a8] bg-[#f6f6f6]">
          <svg width="14" height="14" viewBox="0 0 14 14"><path d="M1 1l12 12M12 1L2 12" stroke="#a47878" strokeWidth="2" /></svg>
        </button>
      </div>
      <button className="flex h-5 w-full items-center rounded-t-[8px] bg-[#f7f7f7] pl-[15px] font-['Liberation_Sans',sans-serif] text-[10px] leading-[14px]">
        <svg width="5" height="9" viewBox="0 0 5 9" className="mr-3"><path d="M0 0v9l5-4.500z" /></svg>
        Properties
      </button>
      <div className="my-[2px] h-[2px] bg-white" />
      <PanelHeader title="Quick Options" />
      <div className="flex h-4 items-end pr-[2px] pl-[2px]">
        <svg width="9" height="9" viewBox="0 0 9 9" className="mr-1 mb-[3px]" fill="#fff" stroke="#000">
          <path d="M.5 8.500l2-2h5l-2 2zM.5 6l2-2h5l-2 2zM.5 3.500l2-2h6l-2 2zM8.500 2v4" />
        </svg>
        <button className="flex h-[15px] flex-1 items-center justify-between rounded-t-[2px] border border-[#707070] bg-linear-to-b from-[#f4f4f4] to-[#d4d4d4] pr-1 pl-1 text-[11px] leading-[13px]">
          (lagencombinatie) Alle lagen
          <RightCaret />
        </button>
      </div>
    </aside>
  );
}

/* ---------- 3D scene ---------- */

const frontPiece =
  "M310 513L499 583 435 625 432 663 440 674 459 699 530 763 702 749 792 686 1070 786 222 957z";
const backPiece =
  "M323 507L853 442.500 1079.500 776 804 678.500 815 670 817 635 818 611 782 539 757 511 685 512 532 562 512 574.500z";

function Textures({ id }: { id: string }) {
  return (
    <defs>
      <filter id={`${id}-grass`} x="0" y="0" width="1" height="1" colorInterpolationFilters="sRGB">
        <feTurbulence type="fractalNoise" baseFrequency=".009 .018" numOctaves="3" seed="4" result="big" />
        <feColorMatrix in="big" type="matrix" values=".24 0 0 0 .04  .2 0 0 0 .175  .13 0 0 0 .08  0 0 0 0 1" result="patch" />
        <feTurbulence type="fractalNoise" baseFrequency=".2 .28" numOctaves="3" seed="9" result="fine" />
        <feColorMatrix in="fine" type="matrix" values=".2 0 0 0 .09  .22 0 0 0 .08  .16 0 0 0 .11  0 0 0 0 1" result="blade" />
        <feComposite in="patch" in2="blade" operator="arithmetic" k2="1" k3="1" k4="-.19" result="sum" />
        <feComposite in="sum" in2="SourceAlpha" operator="in" />
      </filter>
      <filter id={`${id}-wood`} x="0" y="0" width="1" height="1" colorInterpolationFilters="sRGB">
        <feTurbulence type="fractalNoise" baseFrequency=".004 .05" numOctaves="2" seed="3" result="big" />
        <feColorMatrix in="big" type="matrix" values=".15 0 0 0 .27  .1 0 0 0 .16  .06 0 0 0 .1  0 0 0 0 1" result="band" />
        <feTurbulence type="fractalNoise" baseFrequency=".22 .07" numOctaves="2" seed="7" result="fine" />
        <feColorMatrix in="fine" type="matrix" values=".12 0 0 0 -.05  .08 0 0 0 -.03  .05 0 0 0 -.02  0 0 0 0 1" result="grain" />
        <feComposite in="band" in2="grain" operator="arithmetic" k2="1" k3="1" result="sum" />
        <feComposite in="sum" in2="SourceAlpha" operator="in" />
      </filter>
      <linearGradient id={`${id}-wall`}>
        <stop offset="0" stopColor="#77777a" />
        <stop offset=".7" stopColor="#b2b2b6" />
        <stop offset="1" stopColor="#98989c" />
      </linearGradient>
    </defs>
  );
}

function Scene({ id, textured }: { id: string; textured?: boolean }) {
  const grass = textured ? `url(#${id}-grass)` : undefined;
  const wood = textured ? `url(#${id}-wood)` : undefined;
  const edge = textured ? "#0f6a12" : "#1f6a18";
  const shade = textured ? "#0b150b" : "#0f2a0c";
  return (
    <svg className="block w-full" viewBox="58 183 1507 843" role="img" aria-label="Generic Perspective">
      <Textures id={id} />
      {/* terrace and pool */}
      <path d="M853 442.500L1160.500 405 1477 653 1052 733 1040 733 845 446z" fill="#481b0b" filter={wood} />
      <path d="M1044 734.500L1477 653l-6.500 16L1052 750z" fill="#434749" />
      <path d="M1052 749.500l418.500-80.500L1498 691 1079 776.500 1066 774z" fill="#8f9697" />
      <path d="M1477 653l44.500 34.500L1498 691l-27.500-22z" fill="#959d9d" />
      <path d="M1079 776l442.500-88.500L1514 704l-436 89z" fill="#989898" />
      <g fill="none" stroke="#d8181e">
        <path d="M853 442.500L1160.500 405l361 282.500-7.500 16.500-436 89M1052 733l425-80M1079 776l442.500-88.500M1470.500 669L1498 691" />
      </g>
      {/* lawn, back half */}
      <path d={backPiece} fill="#2b7822" filter={grass} />
      <path d="M853 442.500L1052 736" stroke={textured ? "#4c2416" : "#5a2210"} strokeWidth=".8" />
      <g stroke={edge} strokeWidth=".8" strokeLinejoin="round">
        <path d="M323 507l189 67.500 5 25.500-14-6-4-9L326 521z" fill="#48220f" />
        <path d="M512 574.500L532 562l4 24-19 14z" fill="#240f07" />
        <path d="M532 562l153-50 2 24-151 50z" fill="#33180c" />
        <path d="M685 512l72-1 1 24.500-71 .5z" fill="#482311" />
        <path d="M757 511l25 28 36 72-1 24-34-70-25-29.500z" fill="#3a1b0d" />
        <path d="M804 678.500L1079.500 776l-4.500 28-7-2v-15L804 692z" fill="#492110" />
      </g>
      {/* lawn, front half */}
      <path d={frontPiece} fill="#2e7d24" filter={grass} />
      <g stroke={edge} strokeWidth=".8" strokeLinejoin="round">
        <path d="M222 957l848-171-5 28-828 171.500z" fill="#3b1b0f" />
        <path d="M435 625l64-42 5.500 23.500L441 651z" fill="#220f07" />
        <path d="M435 625l6 26-1 23-8-11z" fill="#150a05" />
      </g>
      <path d="M503 594l14 6-6-8z" fill="#2a1006" />
      {/* curved wall, lower left */}
      <path d="M377 873c8-14 18-26 31-31z" fill={shade} />
      <path d="M434 808c12-12 34-12 47-5-10 10-24 26-38 36z" fill={shade} />
      <path d="M356 812c10-18 34-32 64.500-29L438 842.500c-10-2-20-3-30 0-13 7-24 17-31 30z" fill={`url(#${id}-wall)`} />
      <path d="M356 812c4-6 9-10 14.500-14 10 8 24 24 34.500 31l4 13c-14 7-25 18-32 31z" fill="#5d5d60" />
      <g stroke="#ee3238" strokeLinejoin="round">
        <path d="M346 814c8-26 44-46 81-35.500l-6.500 5C390 778 364 790 356 812z" fill="#efdfe3" />
        <path d="M346 814l10-2 21 61-8.500 1.500z" fill="#a8a8ac" />
        <path d="M420.500 783.500l6.500-5 17 60-5.600 4z" fill="#97979b" />
      </g>
      {/* curved wall, upper right */}
      <path d="M879 649l1-11 13-8z" fill={shade} />
      <path d="M922 603l12 3-14 21z" fill={shade} />
      <path d="M881.500 593c2-14 16-21 38.500-18l-3 55.500c-8-2-16-2-24 0-6 3-11 7-13.500 12z" fill={`url(#${id}-wall)`} />
      <path d="M882 590l5 18 6 14v9c-6 3-11 7-13.500 12z" fill="#6c6c70" />
      <g stroke="#ee3238" strokeLinejoin="round">
        <path d="M873.500 594c0-20 20-27 48.700-21.500l-2.200 3c-24-3-38 4-38.500 17.500z" fill="#efdfe3" />
        <path d="M873.500 594l8-1-2.200 56h-8z" fill="#b4b4b8" />
        <path d="M920 575.500l2.200-3-2.300 54-3.300 4z" fill="#97979b" />
      </g>
      {/* axes */}
      <g fill="none">
        <path d="M224 958l97-19M222.500 956L236 888" stroke="#fff" strokeWidth="4.500" />
        <path d="M191 897l31.500 61 97-19.500M222.500 958L236 888" stroke="#000" strokeWidth="1.800" />
      </g>
      <g fontFamily="Liberation Sans" fontSize="11">
        <text x="187" y="890">z</text>
        <text x="238" y="883" fill="#fff" stroke="#000" strokeWidth="1.500" paintOrder="stroke">y</text>
        <text x="327" y="937" fill="#fff" stroke="#000" strokeWidth="1.500" paintOrder="stroke">x</text>
      </g>
    </svg>
  );
}

/* ---------- application window ---------- */

function AppWindow({ id, textured }: { id: string; textured?: boolean }) {
  return (
    <div className="bg-[#f0f0f0] text-black">
      <TitleBar id={id} />
      <MenuBar />
      <div className="flex h-[33px] items-center overflow-hidden border-b border-[#a0a0a0]">
        <div className="ml-[2px] h-[26px] w-[5px] shrink-0 border-l-2 border-dotted border-[#b8b8b8]" />
        <ToolbarEntry entry={["b", "New"]} />
        <ToolbarEntry entry={["b", "Open"]} />
        <button aria-label="Open recent" className="flex w-[9px] shrink-0 justify-center"><Caret /></button>
        {toolbar.map((entry, i) => (
          <ToolbarEntry key={i} entry={entry} />
        ))}
      </div>
      <InfoBox />
      <div className="flex pt-px">
        <Toolbox />
        <main className="flex min-w-0 flex-1 overflow-hidden border-t-2 border-r border-l-2 border-[#808080] border-r-[#a0a0a0] bg-white contain-size">
          <div className="min-w-0 flex-1">
            <Scene id={id} textured={textured} />
          </div>
          <div className="flex w-[14px] flex-col bg-[#f0f0f0]">
            <button aria-label="Scroll up" className="flex h-[18px] items-center justify-center">
              <svg width="7" height="4" viewBox="0 0 7 4"><path d="M0 4h7L3.500 0z" fill="#444" /></svg>
            </button>
            <div className="flex flex-1 items-center justify-center rounded-t-[2px] border border-[#979797] bg-linear-to-r from-[#f4f4f4] via-[#dcdcde] to-[#b8b8bc] pt-20">
              <svg width="7" height="8" viewBox="0 0 7 8"><path d="M0 .5h7M0 3.500h7M0 6.500h7" stroke="#555" /></svg>
            </div>
          </div>
        </main>
        <Navigator />
      </div>
    </div>
  );
}

export default function App() {
  return (
    <div className="h-screen overflow-hidden bg-black">
      <div className="-mr-px bg-white pt-px pl-[2px]">
        <AppWindow id="top" />
      </div>
      <div className="mr-[3px] -ml-[2px]">
        <AppWindow id="bottom" textured />
      </div>
    </div>
  );
}
